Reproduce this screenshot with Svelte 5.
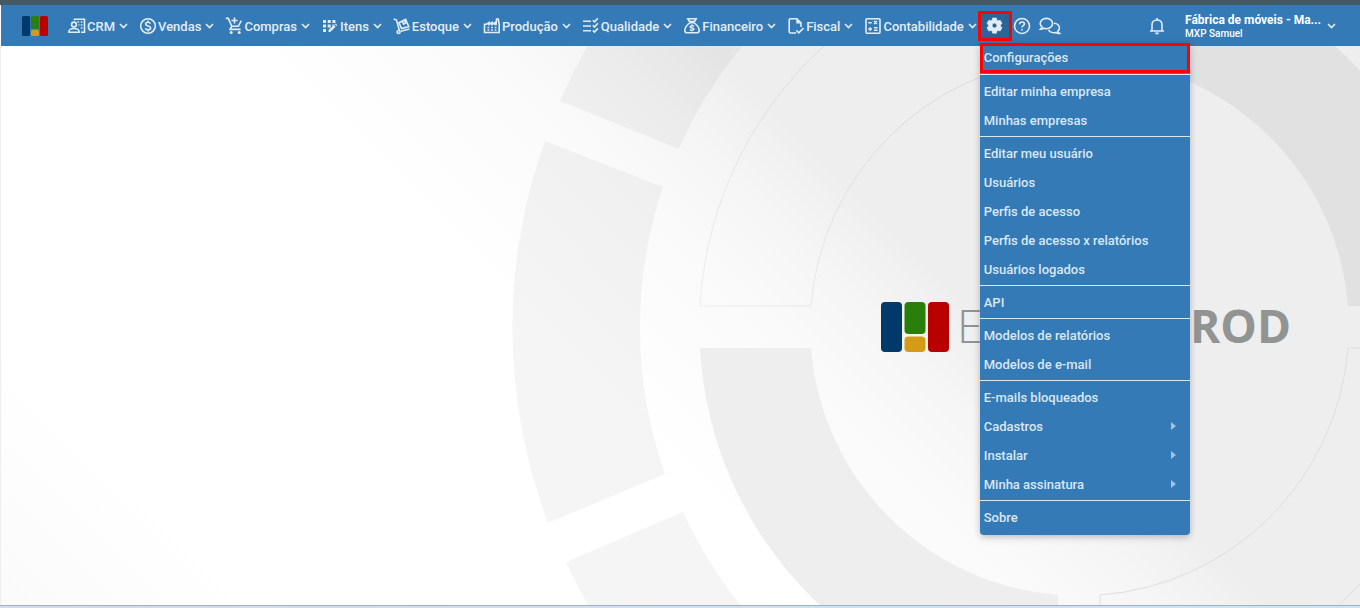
<script>
	const modules = [
		{ label: 'CRM', icon: 'crm' },
		{ label: 'Vendas', icon: 'sales' },
		{ label: 'Compras', icon: 'cart' },
		{ label: 'Itens', icon: 'items' },
		{ label: 'Estoque', icon: 'stock' },
		{ label: 'Produção', icon: 'factory' },
		{ label: 'Qualidade', icon: 'quality' },
		{ label: 'Financeiro', icon: 'money' },
		{ label: 'Fiscal', icon: 'fiscal' },
		{ label: 'Contabilidade', icon: 'accounting' }
	];

	const groups = [
		[{ label: 'Configurações', marked: true }],
		[{ label: 'Editar minha empresa' }, { label: 'Minhas empresas' }],
		[
			{ label: 'Editar meu usuário' },
			{ label: 'Usuários' },
			{ label: 'Perfis de acesso' },
			{ label: 'Perfis de acesso x relatórios' },
			{ label: 'Usuários logados' }
		],
		[{ label: 'API' }],
		[{ label: 'Modelos de relatórios' }, { label: 'Modelos de e-mail' }],
		[
			{ label: 'E-mails bloqueados' },
			{ label: 'Cadastros', submenu: true },
			{ label: 'Instalar', submenu: true },
			{ label: 'Minha assinatura', submenu: true }
		],
		[{ label: 'Sobre' }]
	];

	let settingsOpen = $state(true);
</script>

{#snippet chevron()}
	<svg class="chevron" viewBox="0 0 9 6" aria-hidden="true">
		<path d="M1 1l3.5 3.5L8 1" />
	</svg>
{/snippet}

{#snippet blocks()}
	<rect width="21" height="50" rx="4" fill="#003a6b" />
	<rect x="23.500" width="21" height="32" rx="4" fill="#2a7f0a" />
	<rect x="23.500" y="34.500" width="21" height="15.500" rx="4" fill="#d59a16" />
	<rect x="47" width="21" height="50" rx="4" fill="#b80000" />
{/snippet}

{#snippet icon(name)}
	<svg class="icon" viewBox="0 0 18 18" aria-hidden="true">
		{#if name === 'crm'}
			<circle cx="6" cy="7.500" r="2.400" />
			<path d="M1 15.200v-1c0-1.600 2.500-2.700 5-2.700s5 1.100 5 2.700v1zM6.500 3.200V2.200h10v13H13" />
			<path class="dots" d="M9.500 5h1.600M12.800 5h1.600M10.500 8h1M12.800 8h1.600M12.800 11h1.600" />
		{:else if name === 'sales'}
			<circle cx="9" cy="9" r="7.300" />
			<path d="M11.400 6.600C11 5.700 10.200 5.300 9 5.300c-1.400 0-2.400.7-2.400 1.800 0 2.600 5 1.200 5 3.800 0 1.100-1 1.900-2.600 1.900-1.400 0-2.300-.6-2.600-1.600M9 3.600v1.700M9 12.800v1.700" />
		{:else if name === 'cart'}
			<path d="M.8 1.400h2.500l3.500 7.900h6.500l3-5.600M6.600 9.300l-1.500 3.100h10.500M9.500.5v6M6.500 3.500h6" />
			<circle class="solid" cx="6.200" cy="15.400" r="1.500" />
			<circle class="solid" cx="14.200" cy="15.400" r="1.500" />
		{:else if name === 'items'}
			<path class="solid" d="M2 3h3v3H2zM6.700 3h3v3h-3zM11.400 3h3v3h-3zM2 7.500h3v3H2zM6.700 7.500h3v3h-3zM2 12h3v3H2zM11.400 7.500h2.400l-2.400 2.400z" />
			<path class="solid" d="M7.500 12.900l5.500-5 1.700 1.800-5.500 5.300H7.500zM13.800 7.200l.8-.8 1.700 1.700-.8.8z" />
		{:else if name === 'stock'}
			<path d="M.7 2l2.800 1 2.800 10.300M7.800 14.200l8.700-2.300M6 5.700l6.600-3.400 3.200 7.300-7.300 2zM9.200 4.100l1.500 3 2.100-1.200-1.100-2.500" />
			<circle cx="5.600" cy="15" r="1.500" />
		{:else if name === 'factory'}
			<path d="M1.500 15.500V7.200h2l2.600-1.700v2l3-2v2l3-2v2h1L13.600 2h1.700l.9 5.500v8z" />
			<path class="dots" d="M4.500 10.500h1.700M8.100 10.500h1.700M11.700 10.500h1.700M4.500 13h1.700M8.100 13h1.700M11.700 13h1.700" />
		{:else if name === 'quality'}
			<path d="M1 4.200h8M1 9h8M1 13.800h8M10.800 3.200l1.700 1.700 3.400-3.700M10.800 8.300l1.700 1.700 3.400-3.700M10.800 13.400l1.700 1.700 3.400-3.700" />
		{:else if name === 'money'}
			<path d="M6.500 4.500L4.800 1.700h8.400l-1.700 2.800zM6.500 5.800h5M6.500 6C4 8 2 10.500 1.800 13.200c-.1 1.700.7 2.500 2.200 2.500h10c1.500 0 2.300-.8 2.200-2.500C16 10.500 14 8 11.500 6" />
			<path d="M11 9.200c-1.400-.8-3.800-.6-3.800.7 0 1.500 3.700.6 3.700 2.200 0 1.400-2.600 1.500-3.900.5M9 7.500v1M9 13.200v1" />
		{:else if name === 'fiscal'}
			<path d="M9.200 16H3.500c-.8 0-1.300-.5-1.300-1.300V3c0-.8.500-1.300 1.300-1.300h6.300l4.200 4.200V10M9.300 13.300l2.500 2.500 4.700-4.700" />
			<path class="solid" d="M9.300 1.500v5h5z" />
		{:else if name === 'accounting'}
			<rect x="2" y="1.800" width="14" height="14.400" rx="1" />
			<path class="dots" d="M4.300 5.700h3.500M10 4l3 3M13 4l-3 3M4.300 12h3.700M6.150 10.200v3.700M10 10.800h3.500M10 13.200h3.500" />
		{/if}
	</svg>
{/snippet}

<div class="page">
	<header class="navbar">
		<a class="brand" href="#inicio" aria-label="Início">
			<svg viewBox="0 0 68 50" preserveAspectRatio="none" aria-hidden="true">{@render blocks()}</svg>
		</a>

		<nav class="modules" aria-label="Módulos">
			{#each modules as module (module.label)}
				<button type="button" class="module">
					{@render icon(module.icon)}
					<span>{module.label}</span>
					{@render chevron()}
				</button>
			{/each}
		</nav>

		<div class="settings">
			<button
				type="button"
				class="gear"
				aria-label="Configurações"
				aria-expanded={settingsOpen}
				onclick={() => (settingsOpen = !settingsOpen)}
			>
				<svg viewBox="0 0 24 24" aria-hidden="true">
					<path
						fill="currentColor"
						fill-rule="evenodd"
						stroke="currentColor"
						stroke-linejoin="round"
						d="M9.300 1.500h5.400l.6 3 1.700 1 2.900-1 2.700 4.700-2.300 2v1.900l2.300 2-2.700 4.700-2.900-1-1.700 1-.6 3H9.300l-.6-3-1.700-1-2.900 1-2.700-4.700 2.300-2v-1.900l-2.300-2 2.700-4.700 2.900 1 1.700-1zM12 8.600a3.500 3.500 0 1 0 0 7 3.500 3.500 0 0 0 0-7z"
					/>
				</svg>
			</button>

			{#if settingsOpen}
				<div class="menu">
					{#each groups as group}
						<ul>
							{#each group as item (item.label)}
								<li>
									<a href="#menu" class:marked={item.marked}>
										{item.label}
										{#if item.submenu}<span class="arrow" aria-hidden="true"></span>{/if}
									</a>
								</li>
							{/each}
						</ul>
					{/each}
				</div>
			{/if}
		</div>

		<button type="button" class="tool" aria-label="Ajuda">
			<svg class="help" viewBox="0 0 18 18" aria-hidden="true">
				<circle cx="9" cy="9" r="7.500" />
				<path d="M6.700 7.200c0-1.300 1-2.200 2.400-2.200s2.300.8 2.300 2c0 1.700-2.400 1.700-2.400 3.500M9 12v1.600" />
			</svg>
		</button>
		<button type="button" class="tool" aria-label="Conversas">
			<svg class="chat" viewBox="0 0 22 18" aria-hidden="true">
				<path d="M1.300 12.300c.9-.7 1.500-1.600 1.700-2.500C1.800 8.900 1.200 7.800 1.200 6.500c0-2.900 2.800-5.100 6.200-5.100s6.200 2.200 6.200 5.100-2.800 5.200-6.200 5.200c-.9 0-1.700-.2-2.500-.5-1.100.8-2.300 1.200-3.600 1.100zM15 6.200c3 .2 5.400 2.200 5.400 4.800 0 1.200-.6 2.300-1.500 3.100.2 1 .8 1.700 1.600 2.300-1.400.1-2.600-.3-3.500-1-3.100.9-6.300-.2-7.500-2.600" />
			</svg>
		</button>

		<div class="account">
			<button type="button" class="tool" aria-label="Notificações">
				<svg class="bell" viewBox="0 0 16 18" aria-hidden="true">
					<path d="M1 14h14M3 14V8c0-3 2-5 5-5s5 2 5 5v6M8 3V1" />
					<path class="solid" d="M6 15.500h4c0 1.100-.9 2-2 2s-2-.9-2-2z" />
				</svg>
			</button>
			<button type="button" class="user">
				<span class="names">
					<strong>Fábrica de móveis - Ma...</strong>
					<small>MXP Samuel</small>
				</span>
				{@render chevron()}
			</button>
		</div>
	</header>

	<main>
		<svg class="backdrop" viewBox="1 46 1359 559" preserveAspectRatio="xMaxYMid slice" aria-hidden="true">
			<defs>
				<linearGradient id="sheen" gradientUnits="userSpaceOnUse" x1="0" y1="605" x2="662" y2="-57">
					<stop offset="0" stop-color="#fafafa" />
					<stop offset="0.200" stop-color="#fff" />
					<stop offset="0.600" stop-color="#fff" />
					<stop offset="0.790" stop-color="#fafafa" />
					<stop offset="0.880" stop-color="#f5f5f5" />
					<stop offset="0.960" stop-color="#eee" />
				</linearGradient>
				<linearGradient id="edge" gradientUnits="userSpaceOnUse" x1="700" y1="320" x2="900" y2="120">
					<stop offset="0" stop-color="#eee" />
					<stop offset="1" stop-color="#dadada" />
				</linearGradient>
			</defs>
			<rect y="46" width="1360" height="559" fill="url(#sheen)" />

			<!-- outer ring, broken at the upper and lower left -->
			<g fill="#000">
				<path opacity="0.040" d="M560 101A567 567 0 0 1 800-167L867-58A439 439 0 0 0 679 149z" />
				<path opacity="0.038" d="M545 141A552 552 0 0 0 548 523L665 474A440 440 0 0 1 663 187z" />
				<path opacity="0.038" d="M566 562A567 567 0 0 0 800 820L867 712A439 439 0 0 1 683 512z" />
			</g>

			<!-- inner ring in quarters -->
			<path fill="#eee" d="M700 348H811A269 269 0 0 0 1058 595V707A380 380 0 0 1 700 348z" />
			<path fill="#e1e1e1" d="M1100-52A380 380 0 0 1 1459 306H1348A269 269 0 0 0 1100 59z" />
			<path fill="none" stroke="url(#edge)" d="M700 306A380 380 0 0 1 1058-52V59A269 269 0 0 0 811 306z" />
			<path fill="none" stroke="#dedede" d="M1459 348H1348A269 269 0 0 1 1100 595V707A380 380 0 0 0 1459 348z" />

			<g transform="translate(881 302)">{@render blocks()}</g>
			<text class="wordmark light" x="957" y="343">E</text>
			<text class="wordmark" x="1291" y="343" text-anchor="end">ROD</text>
		</svg>
	</main>

	<footer></footer>
</div>

<style>
	:global(body) {
		margin: 0;
	}

	.page {
		min-height: 100vh;
		display: flex;
		flex-direction: column;
		box-sizing: border-box;
		border-top: 5px solid #455a64;
		font-family: Roboto, sans-serif;
		font-size: 13px;
		font-weight: 500;
	}

	button {
		margin: 0;
		padding: 0;
		border: 0;
		background: transparent;
		color: inherit;
		font: inherit;
		cursor: pointer;
	}

	svg {
		display: block;
		flex: none;
	}

	.navbar {
		position: relative;
		z-index: 1;
		display: flex;
		align-items: center;
		height: 41px;
		margin-left: 1px;
		background: #337ab7;
		color: #e4edf5;
	}

	.brand {
		margin: 0 20px 0 21px;
	}

	.brand svg {
		width: 26px;
		height: 20px;
	}

	.modules {
		display: flex;
		gap: 11px;
	}

	.module {
		display: flex;
		align-items: center;
		white-space: nowrap;
	}

	.module span {
		margin: 0 4px 0 1px;
		padding-top: 2px;
	}

	.icon,
	.help {
		width: 18px;
		height: 18px;
	}

	.icon,
	.help,
	.chat,
	.bell,
	.chevron {
		fill: none;
		stroke: #e4edf5;
		stroke-width: 1.6;
	}

	.icon .dots {
		stroke-width: 1.4;
	}

	.icon .solid,
	.bell .solid {
		fill: #e4edf5;
		stroke: none;
	}

	.chevron {
		width: 9px;
		height: 6px;
	}

	.settings {
		position: relative;
		margin-left: 1px;
	}

	.gear {
		display: grid;
		place-items: center;
		width: 34px;
		height: 30px;
		box-sizing: border-box;
		border: 3px solid #f00;
		background: #2a6598;
	}

	.gear svg {
		width: 17px;
		height: 17px;
	}

	.menu {
		position: absolute;
		top: 32px;
		left: 2px;
		width: 210px;
		border-radius: 0 0 4px 4px;
		background: #337ab7;
		box-shadow: 0 2px 7px rgba(0, 0, 0, 0.25);
	}

	.menu ul {
		margin: 0;
		padding: 2px 0 1px;
		list-style: none;
	}

	.menu ul + ul {
		border-top: 1px solid #dbe7f1;
	}

	.menu ul:last-child {
		padding-bottom: 3px;
	}

	.menu a {
		display: flex;
		align-items: center;
		justify-content: space-between;
		height: 29px;
		box-sizing: border-box;
		padding: 0 14px 0 4px;
		color: #dbe7f1;
		text-decoration: none;
	}

	.menu a.marked {
		height: 30px;
		margin-top: -2px;
		padding-left: 1px;
		border: 3px solid #f00;
	}

	.arrow {
		border: 4px solid transparent;
		border-right: 0;
		border-left: 5px solid #a3c2de;
	}

	.tool {
		margin-left: 1px;
	}

	.tool + .tool {
		margin-left: 8px;
	}

	.chat {
		width: 22px;
		height: 18px;
	}

	.account {
		display: flex;
		align-items: center;
		gap: 20px;
		margin-left: auto;
		padding-right: 24px;
	}

	.bell {
		width: 16px;
		height: 18px;
	}

	.user {
		display: flex;
		align-items: center;
		gap: 6px;
		color: #fff;
		text-align: left;
	}

	.names {
		display: grid;
		padding-top: 2px;
		white-space: nowrap;
	}

	.names strong {
		font-size: 12px;
		font-weight: 700;
		line-height: 14px;
	}

	.names small {
		font-size: 10px;
		line-height: 14px;
	}

	main {
		position: relative;
		flex: 1;
		overflow: hidden;
		border-left: 1px solid #eee;
	}

	.backdrop {
		position: absolute;
		inset: 0;
		width: 100%;
		height: 100%;
	}

	.wordmark {
		fill: #929494;
		font-family: 'Open Sans', 'Noto Sans', sans-serif;
		font-size: 46px;
		font-weight: 700;
	}

	.wordmark.light {
		font-weight: 300;
	}

	footer {
		height: 2px;
		border-top: 1px solid #a3b1c0;
		background: linear-gradient(to right, #d3daee, #cbe6f0);
	}
</style>
